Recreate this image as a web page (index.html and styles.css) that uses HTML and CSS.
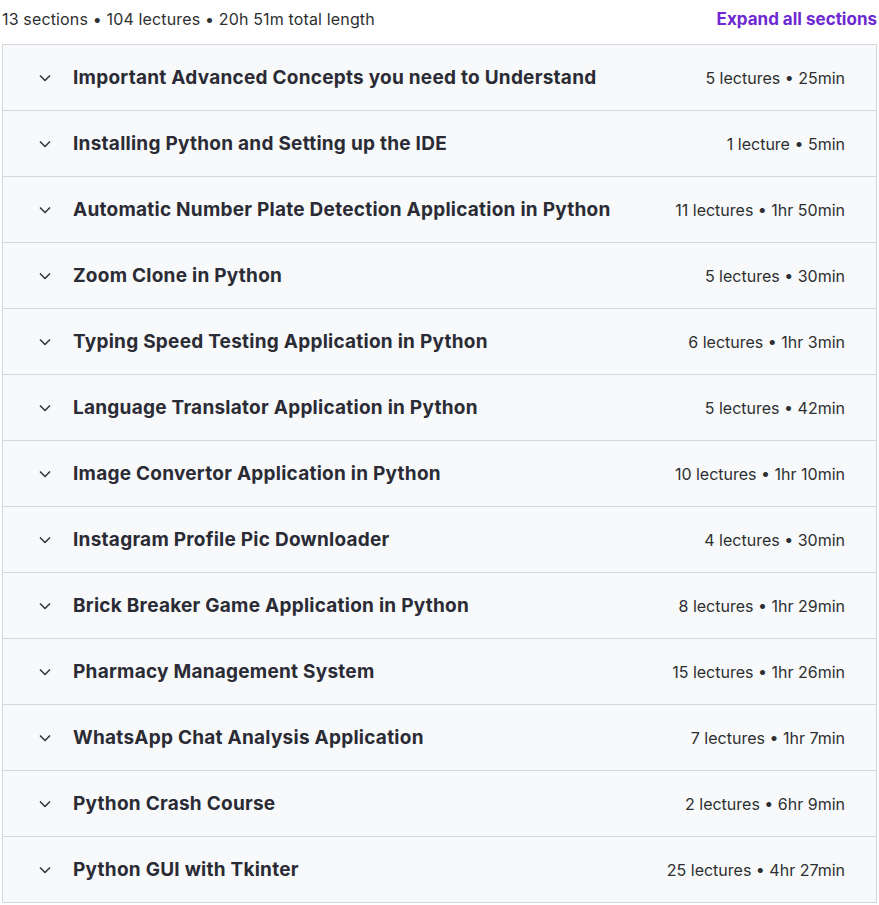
FILE: index.html
```html
<!DOCTYPE html>
<html>
<head>
    <title>Course content</title>
    <link rel="stylesheet" href="styles.css">
</head>
<body>
    <div class="curriculum">
        <div class="summary">
            <span class="stats">13 sections • 104 lectures • 20h 51m total length</span>
            <button class="expand-btn">Expand all sections</button>
        </div>
        <div class="sections">
            <div class="section">
                <svg class="chevron" viewBox="0 0 12 8"><path d="M1 1.5 L6 6.5 L11 1.5"/></svg>
                <span class="title">Important Advanced Concepts you need to Understand</span>
                <span class="meta">5 lectures • 25min</span>
            </div>
            <div class="section">
                <svg class="chevron" viewBox="0 0 12 8"><path d="M1 1.5 L6 6.5 L11 1.5"/></svg>
                <span class="title">Installing Python and Setting up the IDE</span>
                <span class="meta">1 lecture • 5min</span>
            </div>
            <div class="section">
                <svg class="chevron" viewBox="0 0 12 8"><path d="M1 1.5 L6 6.5 L11 1.5"/></svg>
                <span class="title">Automatic Number Plate Detection Application in Python</span>
                <span class="meta">11 lectures • 1hr 50min</span>
            </div>
            <div class="section">
                <svg class="chevron" viewBox="0 0 12 8"><path d="M1 1.5 L6 6.5 L11 1.5"/></svg>
                <span class="title">Zoom Clone in Python</span>
                <span class="meta">5 lectures • 30min</span>
            </div>
            <div class="section">
                <svg class="chevron" viewBox="0 0 12 8"><path d="M1 1.5 L6 6.5 L11 1.5"/></svg>
                <span class="title">Typing Speed Testing Application in Python</span>
                <span class="meta">6 lectures • 1hr 3min</span>
            </div>
            <div class="section">
                <svg class="chevron" viewBox="0 0 12 8"><path d="M1 1.5 L6 6.5 L11 1.5"/></svg>
                <span class="title">Language Translator Application in Python</span>
                <span class="meta">5 lectures • 42min</span>
            </div>
            <div class="section">
                <svg class="chevron" viewBox="0 0 12 8"><path d="M1 1.5 L6 6.5 L11 1.5"/></svg>
                <span class="title">Image Convertor Application in Python</span>
                <span class="meta">10 lectures • 1hr 10min</span>
            </div>
            <div class="section">
                <svg class="chevron" viewBox="0 0 12 8"><path d="M1 1.5 L6 6.5 L11 1.5"/></svg>
                <span class="title">Instagram Profile Pic Downloader</span>
                <span class="meta">4 lectures • 30min</span>
            </div>
            <div class="section">
                <svg class="chevron" viewBox="0 0 12 8"><path d="M1 1.5 L6 6.5 L11 1.5"/></svg>
                <span class="title">Brick Breaker Game Application in Python</span>
                <span class="meta">8 lectures • 1hr 29min</span>
            </div>
            <div class="section">
                <svg class="chevron" viewBox="0 0 12 8"><path d="M1 1.5 L6 6.5 L11 1.5"/></svg>
                <span class="title">Pharmacy Management System</span>
                <span class="meta">15 lectures • 1hr 26min</span>
            </div>
            <div class="section">
                <svg class="chevron" viewBox="0 0 12 8"><path d="M1 1.5 L6 6.5 L11 1.5"/></svg>
                <span class="title">WhatsApp Chat Analysis Application</span>
                <span class="meta">7 lectures • 1hr 7min</span>
            </div>
            <div class="section">
                <svg class="chevron" viewBox="0 0 12 8"><path d="M1 1.5 L6 6.5 L11 1.5"/></svg>
                <span class="title">Python Crash Course</span>
                <span class="meta">2 lectures • 6hr 9min</span>
            </div>
            <div class="section">
                <svg class="chevron" viewBox="0 0 12 8"><path d="M1 1.5 L6 6.5 L11 1.5"/></svg>
                <span class="title">Python GUI with Tkinter</span>
                <span class="meta">25 lectures • 4hr 27min</span>
            </div>
        </div>
    </div>
</body>
</html>
```

FILE: styles.css
```css
body {
    margin: 0;
    padding: 0 2px 0 2px;
    font-family: Inter, "Noto Sans", sans-serif;
    color: #2d2f31;
    background: #fff;
}
.curriculum {
    width: 875px;
}
.summary {
    display: flex;
    justify-content: space-between;
    align-items: center;
    height: 38px;
    margin-bottom: 6px;
}
.stats {
    font-size: 16px;
    letter-spacing: 0.15px;
}
.expand-btn {
    background: none;
    border: none;
    padding: 0;
    font-family: inherit;
    font-size: 17px;
    font-weight: 700;
    color: #6d28d2;
    cursor: pointer;
}
.sections {
    border: 1px solid #d1d7dc;
    background: #f7f9fa;
}
.section {
    display: flex;
    align-items: center;
    height: 65px;
    padding: 0 31px 0 36px;
    border-bottom: 1px solid #d1d7dc;
}
.section:last-child {
    border-bottom: none;
}
.chevron {
    width: 12px;
    height: 8px;
    fill: none;
    stroke: #2d2f31;
    stroke-width: 1.5;
    margin-right: 22px;
}
.title {
    flex: 1;
    font-size: 19px;
    font-weight: 700;
    letter-spacing: 0.25px;
    color: #2a2b35;
}
.meta {
    font-size: 16px;
}
```
